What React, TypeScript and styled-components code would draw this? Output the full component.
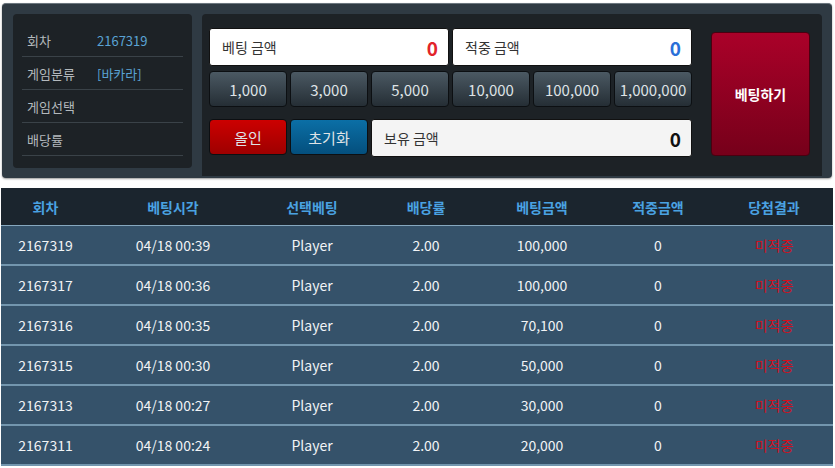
import { FC } from 'react'
import styled, { createGlobalStyle, css } from 'styled-components'

const GlobalStyle = createGlobalStyle`
  html, body {
    margin: 0;
    padding: 0;
    background: #ffffff;
  }
  body {
    font-family: "Noto Sans CJK KR", "Noto Sans", sans-serif;
  }
`

const Page = styled.div`
  padding: 3px 3px 0 2px;
  display: flex;
  flex-direction: column;
  gap: 10px;
`

const Board = styled.div`
  display: flex;
  gap: 10px;
  height: 175px;
  box-sizing: border-box;
  padding: 10px 10px 2px 11px;
  background: #2f3a43;
  border-top: 1px solid #6b767e;
  border-radius: 4px;
  box-shadow: 0 1px 2px rgba(0, 0, 0, 0.4);
`

const InfoPanel = styled.div`
  width: 179px;
  height: 154px;
  box-sizing: border-box;
  padding: 10px 9px 0;
  background: #1d2226;
  border-radius: 4px;
`

const InfoRow = styled.div`
  display: flex;
  align-items: center;
  height: 32px;
  padding-left: 5px;
  border-bottom: 1px solid #3a4248;
  font-size: 13px;
`

const InfoLabel = styled.span`
  width: 70px;
  color: #b4b9bd;
`

const InfoValue = styled.span`
  color: #5aa3d4;
`

const BetPanel = styled.div`
  flex: 1;
  display: flex;
  align-items: flex-start;
  gap: 19px;
  padding: 14px 12px 0 7px;
  background: #1d2226;
  border-radius: 4px 4px 0 0;
`

const BetColumn = styled.div`
  width: 483px;
  display: flex;
  flex-direction: column;
`

const Line = styled.div<{ $mt?: number }>`
  display: flex;
  gap: 3px;
  margin-top: ${({ $mt }) => $mt ?? 0}px;
`

const AmountBox = styled.div<{ $light?: boolean }>`
  flex: 1;
  height: 38px;
  box-sizing: border-box;
  display: flex;
  align-items: center;
  justify-content: space-between;
  padding: 0 10px 0 12px;
  border-radius: 3px;
  background: ${({ $light }) => ($light ? '#f4f4f4' : '#ffffff')};
  border: 1px solid #111;
  font-size: 14px;
  color: #333;
`

const AmountValue = styled.span<{ $tone: 'red' | 'blue' | 'dark' }>`
  font-weight: 700;
  font-size: 19px;
  color: ${({ $tone }) =>
    $tone === 'red' ? '#e2242a' : $tone === 'blue' ? '#2a6fd8' : '#111'};
`

const Btn = styled.button<{ $kind?: 'chip' | 'allin' | 'reset' }>`
  ${({ $kind = 'chip' }) => css`
    width: 78px;
    height: 36px;
    padding: 0;
    border: 1px solid #0c0f12;
    border-radius: 4px;
    font-family: inherit;
    font-size: 15px;
    color: #dfe3e6;
    background: ${$kind === 'allin'
      ? 'linear-gradient(#cc0000, #9e0000)'
      : $kind === 'reset'
        ? 'linear-gradient(#0b6fa6, #044f7d)'
        : 'linear-gradient(#4b5963, #252e35)'};
    ${$kind === 'chip' &&
    css`
      flex: 1;
      width: auto;
    `}
  `}
`

const BetButton = styled.button`
  width: 99px;
  height: 124px;
  margin-top: 4px;
  border: 1px solid #4a0010;
  border-radius: 4px;
  background: linear-gradient(#aa0129, #76001a);
  color: #ffffff;
  font-family: inherit;
  font-weight: 700;
  font-size: 14px;
`

const Table = styled.div`
  margin-right: -1px;
  margin-left: -1px;
`

const Cols = css`
  display: grid;
  grid-template-columns: 89px 166px 112px 116px 116px 116px 116px;
  align-items: center;
  text-align: center;
`

const HeadRow = styled.div`
  ${Cols};
  height: 37px;
  background: #1b252e;
  border-bottom: 1px solid #86a8bf;
  color: #4aa2e2;
  font-weight: 700;
  font-size: 14px;
`

const BodyRow = styled.div`
  ${Cols};
  height: 38px;
  background: #35526a;
  border-bottom: 2px solid #7396ae;
  color: #f2f4f6;
  font-size: 14px;
`

const Result = styled.span`
  color: #d01020;
  font-size: 14px;
`

const rows = [
  ['2167319', '04/18 00:39', '100,000'],
  ['2167317', '04/18 00:36', '100,000'],
  ['2167316', '04/18 00:35', '70,100'],
  ['2167315', '04/18 00:30', '50,000'],
  ['2167313', '04/18 00:27', '30,000'],
  ['2167311', '04/18 00:24', '20,000'],
]

const chips = ['1,000', '3,000', '5,000', '10,000', '100,000', '1,000,000']

const App: FC = () => {
  return (
    <>
      <GlobalStyle />
      <Page>
        <Board>
          <InfoPanel>
            <InfoRow>
              <InfoLabel>회차</InfoLabel>
              <InfoValue>2167319</InfoValue>
            </InfoRow>
            <InfoRow>
              <InfoLabel>게임분류</InfoLabel>
              <InfoValue>[바카라]</InfoValue>
            </InfoRow>
            <InfoRow>
              <InfoLabel>게임선택</InfoLabel>
            </InfoRow>
            <InfoRow>
              <InfoLabel>배당률</InfoLabel>
            </InfoRow>
          </InfoPanel>
          <BetPanel>
            <BetColumn>
              <Line>
                <AmountBox>
                  베팅 금액<AmountValue $tone="red">0</AmountValue>
                </AmountBox>
                <AmountBox>
                  적중 금액<AmountValue $tone="blue">0</AmountValue>
                </AmountBox>
              </Line>
              <Line $mt={5}>
                {chips.map((c) => (
                  <Btn key={c}>{c}</Btn>
                ))}
              </Line>
              <Line $mt={12}>
                <Btn $kind="allin">올인</Btn>
                <Btn $kind="reset">초기화</Btn>
                <AmountBox $light>
                  보유 금액<AmountValue $tone="dark">0</AmountValue>
                </AmountBox>
              </Line>
            </BetColumn>
            <BetButton>베팅하기</BetButton>
          </BetPanel>
        </Board>
        <Table>
          <HeadRow>
            <span>회차</span>
            <span>베팅시각</span>
            <span>선택베팅</span>
            <span>배당률</span>
            <span>베팅금액</span>
            <span>적중금액</span>
            <span>당첨결과</span>
          </HeadRow>
          {rows.map(([id, time, amount]) => (
            <BodyRow key={id}>
              <span>{id}</span>
              <span>{time}</span>
              <span>Player</span>
              <span>2.00</span>
              <span>{amount}</span>
              <span>0</span>
              <Result>미적중</Result>
            </BodyRow>
          ))}
        </Table>
      </Page>
    </>
  )
}

export default App
